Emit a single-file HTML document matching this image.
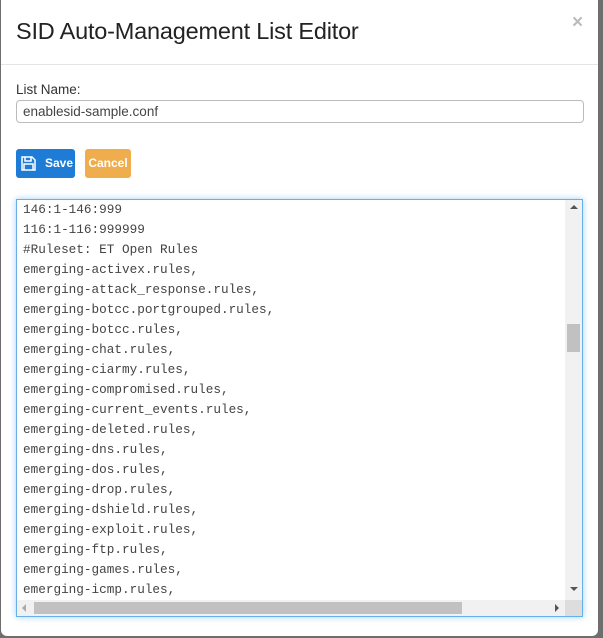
<!DOCTYPE html>
<html><head><style>
body{margin:0;width:603px;height:638px;background:#6e6e6e;position:relative;overflow:hidden;font-family:"Liberation Sans",sans-serif}
.modal{position:absolute;left:1px;top:-6px;width:597px;height:642px;background:#fff;border-radius:6px}
.title{position:absolute;left:15px;top:24px;font-size:23.5px;color:#222;letter-spacing:-0.2px}
.close{position:absolute;left:571px;top:18px;font-size:19px;color:#bbb;font-weight:bold}
.hr{position:absolute;left:0;top:70px;width:597px;height:1px;background:#e5e5e5}
.lbl{position:absolute;left:15px;top:88px;font-size:13.5px;color:#333}
.inp{position:absolute;left:15px;top:106px;width:560px;height:21px;border:1px solid #bbb;border-radius:4px;font-size:13.5px;color:#444;line-height:21px;padding-left:6px;box-sizing:content-box}
.btn{position:absolute;top:155px;height:29px;border-radius:3px;color:#fff;font-size:12px;font-weight:bold;line-height:29px}
.save{left:15px;width:59px;background:#1e7bd6}
.cancel{left:84px;width:46px;background:#f0ad4e;text-align:center}
.ta{position:absolute;left:15px;top:205px;width:565px;height:416px;border:1px solid #66afe9;box-shadow:0 0 6px rgba(102,175,233,.6);overflow:hidden}
.txt{position:absolute;left:6px;top:0;font-family:"Liberation Mono",monospace;font-size:12.7px;line-height:20px;color:#444;white-space:pre}
.vs{position:absolute;right:0;top:0;width:17px;height:400px;background:#f1f1f1}
.hs{position:absolute;left:0;bottom:0;width:549px;height:16px;background:#f1f1f1}
.corner{position:absolute;right:0;bottom:0;width:17px;height:16px;background:#ddd}
</style></head><body>
<div class="modal">
<div class="title">SID Auto-Management List Editor</div>
<div class="close">×</div>
<div class="hr"></div>
<div class="lbl">List Name:</div>
<div class="inp">enablesid-sample.conf</div>
<div class="btn save"><svg style="position:absolute;left:5px;top:7px" width="15" height="15" viewBox="0 0 15 15"><path d="M1 1h10l3 3v10H1z M4 1v4h6V1 M3 14V8h9v6" fill="none" stroke="#fff" stroke-width="1.5"/></svg><span style="position:absolute;left:29px">Save</span></div>
<div class="btn cancel">Cancel</div>
<div class="ta">
<div class="txt">146:1-146:999
116:1-116:999999
#Ruleset: ET Open Rules
emerging-activex.rules,
emerging-attack_response.rules,
emerging-botcc.portgrouped.rules,
emerging-botcc.rules,
emerging-chat.rules,
emerging-ciarmy.rules,
emerging-compromised.rules,
emerging-current_events.rules,
emerging-deleted.rules,
emerging-dns.rules,
emerging-dos.rules,
emerging-drop.rules,
emerging-dshield.rules,
emerging-exploit.rules,
emerging-ftp.rules,
emerging-games.rules,
emerging-icmp.rules,</div>
<div class="vs"><div style="position:absolute;left:5px;top:5px;border:4px solid transparent;border-bottom:4px solid #555;border-top:0"></div><div style="position:absolute;left:2px;top:124px;width:13px;height:28px;background:#c1c1c1"></div><div style="position:absolute;left:5px;top:387px;border:4px solid transparent;border-top:4px solid #555;border-bottom:0"></div></div>
<div class="hs"><div style="position:absolute;left:5px;top:4px;border:4px solid transparent;border-right:4px solid #aaa;border-left:0"></div><div style="position:absolute;left:17px;top:2px;width:428px;height:12px;background:#c1c1c1"></div><div style="position:absolute;left:538px;top:4px;border:4px solid transparent;border-left:4px solid #555;border-right:0"></div></div>
<div class="corner"></div>
</div>
</div>
</body></html>
